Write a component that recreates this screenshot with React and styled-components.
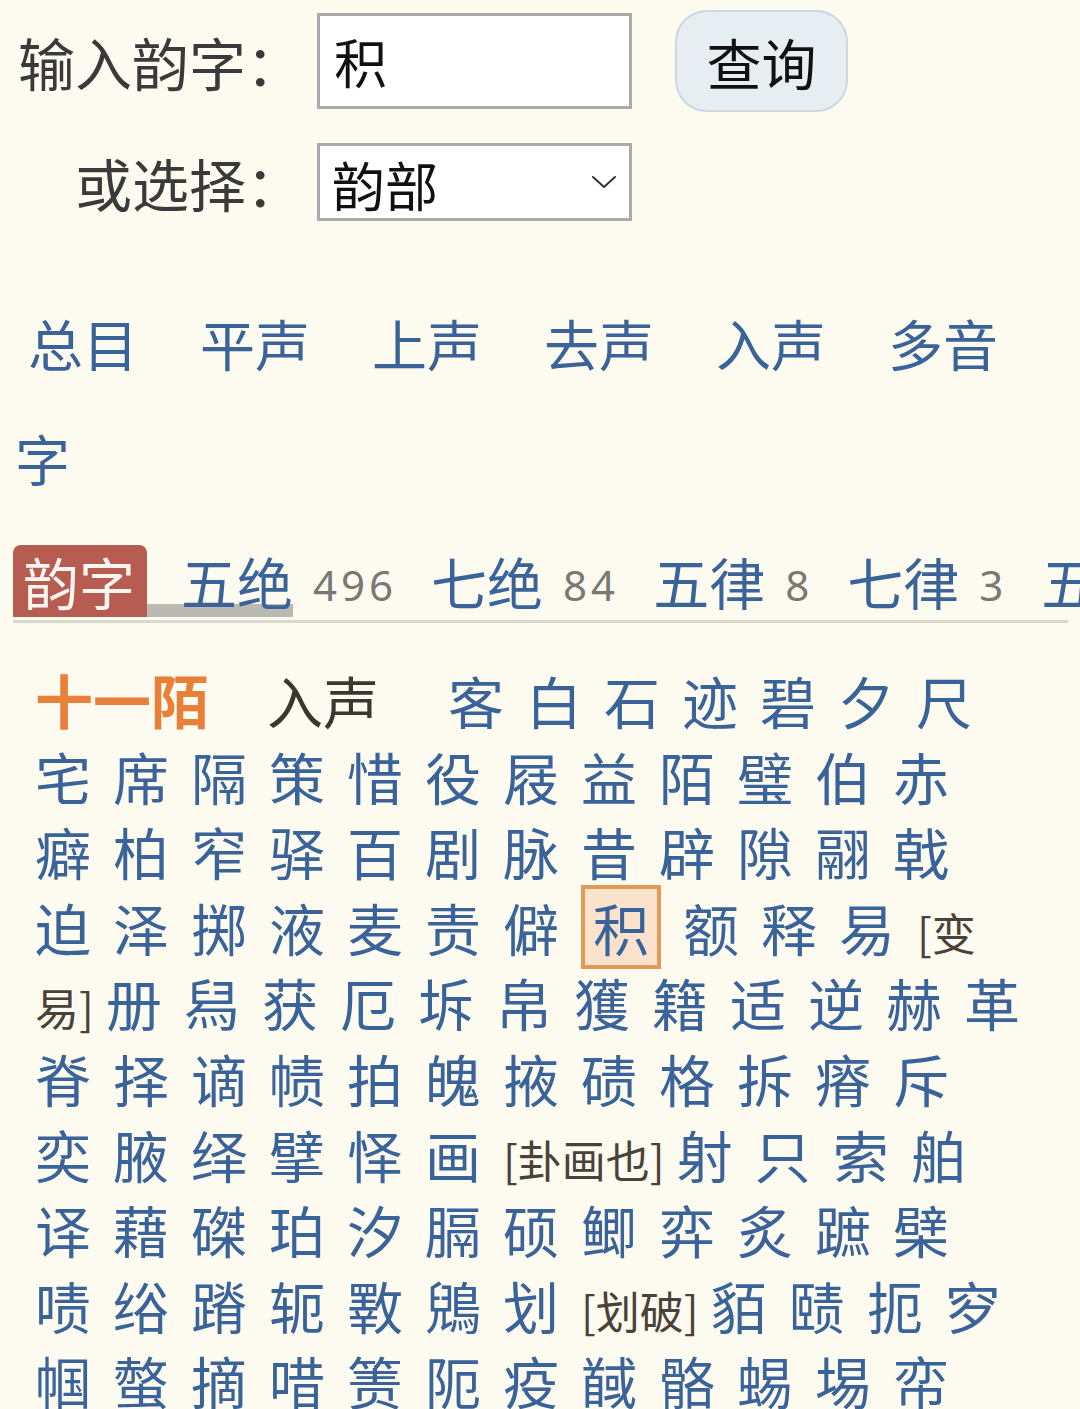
import React from 'react';
import styled, { createGlobalStyle } from 'styled-components';

const GlobalStyle = createGlobalStyle`
    html, body {
        margin: 0;
        padding: 0;
        background-color: #fdfbf0;
        overflow-x: hidden;
    }
    body {
        font-family: "Noto Sans", "Noto Sans CJK SC", sans-serif;
    }
`;

const blue = '#3a6499';

const navLinks = ['总目', '平声', '上声', '去声', '入声', '多音字'];

const tabs = [
    { name: '五绝', count: 496 },
    { name: '七绝', count: 84 },
    { name: '五律', count: 8 },
    { name: '七律', count: 3 },
    { name: '五排', count: null },
];

// 陌韵 입성자 목록, [] 안은 주석
const rhymeText = '客白石迹碧夕尺宅席隔策惜役屐益陌璧伯赤癖柏窄驿百剧脉昔辟隙翮戟迫泽掷液麦责僻积额释易[变易]册舄获厄坼帛獲籍适逆赫革脊择谪帻拍魄掖碛格拆瘠斥奕腋绎擘怿画[卦画也]射只索舶译藉磔珀汐膈硕鲫弈炙蹠檗啧绤蹐轭斁鶂划[划破]貊赜扼穸帼螫摘唶箦阨疫馘骼蜴埸帟';

const current = '积';

// Liberation Sans 공백 폭 (0.2778em @ 56px)
const SPACE_WIDTH = 15.56;

const Chevron = () => (
    <svg width="26" height="16" viewBox="0 0 26 16" fill="none">
        <path d="M2 3 L13 13 L24 3" stroke="#333" strokeWidth="2" strokeLinecap="round" strokeLinejoin="round" />
    </svg>
);

const App = () => {
    const items = rhymeText.match(/\[[^\]]+\]|./gu);

    return (
        <Page>
            <GlobalStyle />
            <Form>
                <Label>输入韵字：</Label>
                <TextInput defaultValue="积" />
                <SearchButton>查询</SearchButton>
                <Label>或选择：</Label>
                <SelectWrap>
                    <Select defaultValue="韵部">
                        <option>韵部</option>
                    </Select>
                    <SelectArrow><Chevron /></SelectArrow>
                </SelectWrap>
            </Form>

            <Nav>
                {navLinks.map(item => (
                    <NavLink key={item}>{item}</NavLink>
                ))}
            </Nav>

            <TabStrip>
                <ActiveTab>韵字</ActiveTab>
                {tabs.map((tab, idx) => (
                    <React.Fragment key={tab.name}>
                        <TabLabel marked={idx === 0}>{tab.name}</TabLabel>
                        {tab.count !== null && <TabCount>{tab.count}</TabCount>}
                    </React.Fragment>
                ))}
            </TabStrip>

            <Rhyme>
                <RhymeTitle>十一陌</RhymeTitle>
                <Gap size={58}>{' '}</Gap>
                <ToneTag>入声</ToneTag>
                <Gap size={69}>{' '}</Gap>
                {items.map((item, idx) => {
                    if (item.startsWith('[')) {
                        return (
                            <React.Fragment key={idx}>
                                <Note>{item}</Note>
                                <Gap size={12}>{' '}</Gap>
                            </React.Fragment>
                        );
                    }
                    return (
                        <React.Fragment key={idx}>
                            {item === current
                                ? <CurrentChar>{item}</CurrentChar>
                                : <Char>{item}</Char>}
                            <Gap size={22}>{' '}</Gap>
                        </React.Fragment>
                    );
                })}
            </Rhyme>
        </Page>
    );
}

const Page = styled.div`
    padding: 10px 0 0 13px;
    font-family: "Noto Sans", "Noto Sans CJK SC", sans-serif;
`;
const Form = styled.div`
    display: grid;
    grid-template-columns: 290px 315px auto;
    grid-template-rows: 102px 78px;
    column-gap: 14px;
    row-gap: 31px;
    align-items: center;
`;
const Label = styled.div`
    font-size: 57px;
    color: #3a3a3a;
    text-align: right;
    white-space: nowrap;
    font-family: "Noto Sans CJK SC", sans-serif;
`;
const TextInput = styled.input`
    box-sizing: border-box;
    width: 315px;
    height: 96px;
    border: 3px solid #aaaaaa;
    background-color: #ffffff;
    padding: 0 14px;
    font-size: 53px;
    font-family: "Noto Sans CJK SC", sans-serif;
    color: #111111;
    outline: none;
`;
const SearchButton = styled.button`
    box-sizing: border-box;
    justify-self: start;
    margin-left: 29px;
    width: 173px;
    height: 102px;
    border: 2px solid #c9d8e2;
    border-radius: 32px;
    background-color: #e7eef2;
    font-size: 55px;
    font-family: "Noto Sans CJK SC", sans-serif;
    color: #111111;
    padding: 0;
`;
const SelectWrap = styled.div`
    position: relative;
    width: 315px;
    height: 78px;
`;
const Select = styled.select`
    appearance: none;
    box-sizing: border-box;
    width: 100%;
    height: 100%;
    border: 3px solid #aaaaaa;
    border-radius: 0;
    background-color: #ffffff;
    padding: 0 12px;
    font-size: 53px;
    font-family: "Noto Sans CJK SC", sans-serif;
    color: #111111;
    outline: none;
`;
const SelectArrow = styled.div`
    position: absolute;
    right: 15px;
    top: 31px;
    display: flex;
    pointer-events: none;
`;
const Nav = styled.div`
    margin-top: 64px;
    width: 1025px;
    padding-left: 2px;
    text-indent: 13px;
    font-size: 55px;
    line-height: 115px;
    font-family: "Noto Sans CJK SC", sans-serif;
`;
const NavLink = styled.a`
    color: ${blue};
    margin-right: 62px;
    text-decoration: none;
    cursor: pointer;
`;
const TabStrip = styled.div`
    margin-top: 30px;
    width: 1055px;
    display: flex;
    align-items: center;
    white-space: nowrap;
    padding-bottom: 3px;
    border-bottom: 3px solid #d9d8ce;
`;
const ActiveTab = styled.div`
    flex-shrink: 0;
    height: 72px;
    line-height: 72px;
    padding: 0 10px;
    width: 114px;
    background-color: #b65c51;
    border-radius: 8px 8px 0 0;
    color: #fdf6f0;
    font-size: 56px;
    font-family: "Noto Sans CJK SC", sans-serif;
`;
const TabLabel = styled.div`
    flex-shrink: 0;
    height: 72px;
    line-height: 72px;
    padding-left: 34px;
    color: ${blue};
    font-size: 56px;
    font-family: "Noto Sans CJK SC", sans-serif;
    box-shadow: ${(props) => props.marked ? 'inset 0 -13px 0 #bab9b2' : 'none'};
`;
const TabCount = styled.div`
    flex-shrink: 0;
    margin-left: 20px;
    padding-top: 6px;
    color: #7a7873;
    font-size: 42px;
    letter-spacing: 4px;
    font-family: "Noto Sans", sans-serif;
`;
const Rhyme = styled.div`
    margin: 39px 0 0 22px;
    width: 988px;
    font-size: 56px;
    line-height: 75.6px;
    font-family: "Noto Sans CJK SC", sans-serif;
`;
const Gap = styled.span`
    font-family: "Liberation Sans", sans-serif;
    font-size: 56px;
    line-height: 0;
    word-spacing: ${(props) => props.size - SPACE_WIDTH}px;
`;
const RhymeTitle = styled.span`
    color: #e8803a;
    font-size: 58px;
    font-weight: bold;
`;
const ToneTag = styled.span`
    color: #3d3630;
`;
const Char = styled.a`
    color: ${blue};
    text-decoration: none;
    cursor: pointer;
`;
const CurrentChar = styled.a`
    display: inline-block;
    line-height: 1;
    margin: -6px 0;
    padding: 10px 8px;
    border: 4px solid #e29a57;
    background-color: #fbe2cd;
    color: ${blue};
    cursor: pointer;
`;
const Note = styled.span`
    color: #4a4239;
    font-size: 44px;
    line-height: 1;
`;

export default App;
